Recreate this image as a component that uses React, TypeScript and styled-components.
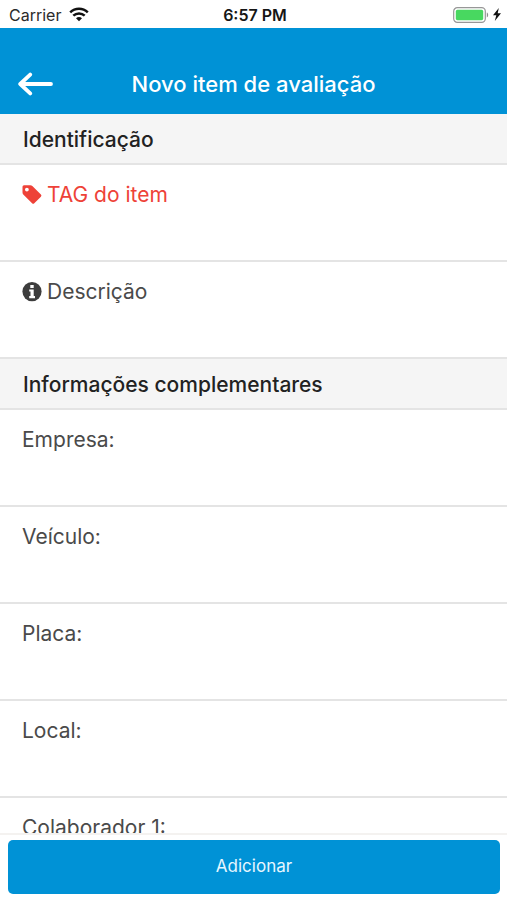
import React, { useId } from "react";
import styled, { createGlobalStyle } from "styled-components";

const blue = "#0092d6";
const line = "#e4e4e4";

const GlobalStyle = createGlobalStyle`
  * { box-sizing: border-box; }
  body {
    margin: 0;
    background: #fff;
    font-family: Inter, "Liberation Sans", sans-serif;
  }
`;

const Screen = styled.div`
  display: flex;
  flex-direction: column;
  height: 100vh;
  background: #fff;
`;

const StatusBar = styled.div`
  flex: none;
  display: grid;
  grid-template-columns: 1fr auto 1fr;
  align-items: center;
  height: 28px;
  padding: 1px 6px 0 9px;
  font-size: 16px;
  line-height: 20px;
  color: #2b2b2b;
`;

const Carrier = styled.div`
  display: flex;
  align-items: center;
  gap: 8px;
`;

const Clock = styled.time`
  font-weight: 600;
  color: #161616;
`;

const Power = styled.div`
  display: flex;
  align-items: center;
  justify-content: flex-end;
  gap: 4px;
`;

const Header = styled.header`
  flex: none;
  display: grid;
  grid-template-columns: 48px 1fr 48px;
  align-items: center;
  height: 86px;
  padding: 26px 12px 0;
  background: ${blue};
  color: #fff;
`;

const BackButton = styled.button`
  display: flex;
  align-items: center;
  justify-content: center;
  height: 44px;
  padding: 0;
  border: 0;
  background: none;
  color: inherit;
  cursor: pointer;
`;

const Title = styled.h1`
  margin: 0;
  font-size: 22px;
  line-height: 28px;
  font-weight: 500;
  text-align: center;
`;

const Form = styled.form`
  flex: 1;
  min-height: 0;
  display: flex;
  flex-direction: column;
`;

const Fields = styled.main`
  flex: 1;
  min-height: 0;
  overflow-y: auto;
  scrollbar-width: none;
`;

const SectionTitle = styled.h2`
  margin: 0;
  padding: 13px 23px 10px;
  border-bottom: 2px solid ${line};
  background: #f5f5f5;
  color: #222;
  font-size: 21px;
  line-height: 26px;
  font-weight: 500;
`;

const Row = styled.div`
  display: flex;
  flex-direction: column;
  height: 97px;
  border-bottom: 2px solid ${line};
`;

const Label = styled.label<{ $required?: boolean }>`
  display: flex;
  align-items: center;
  gap: 5px;
  padding: 17px 22px 0;
  font-size: 21px;
  line-height: 26px;
  color: ${(p) => (p.$required ? "#ee4238" : "#4a4a4a")};
`;

const TextInput = styled.input`
  flex: 1;
  width: 100%;
  min-height: 0;
  padding: 0 22px;
  border: 0;
  outline: 0;
  background: transparent;
  color: #222;
  font: inherit;
  font-size: 21px;
`;

const Footer = styled.footer`
  flex: none;
  padding: 5px 7px 6px 8px;
  border-top: 2px solid #f4f2f0;
  background: #fff;
`;

const SubmitButton = styled.button`
  display: block;
  width: 100%;
  height: 54px;
  padding: 0 0 2px;
  border: 0;
  border-radius: 5px;
  background: ${blue};
  color: #e6f6ff;
  font: inherit;
  font-size: 17px;
  cursor: pointer;
`;

const WifiIcon = () => (
  <svg width="20" height="15" viewBox="0 0 20 15" fill="none" stroke="#111" strokeWidth="2.5" aria-hidden="true">
    <path d="M1.2 5.4C6.2 .6 13.8 .6 18.8 5.4" />
    <path d="M4.3 8.7C7.5 5.6 12.5 5.6 15.7 8.7" />
    <path d="M7 11.3C8.7 9.6 11.3 9.6 13 11.3L10 14.2Z" fill="#111" stroke="none" />
  </svg>
);

const BatteryIcon = () => (
  <svg width="36" height="16" viewBox="0 0 36 16" aria-hidden="true">
    <rect x=".7" y=".7" width="31.6" height="14.6" rx="3.6" fill="#fff" stroke="#979797" strokeWidth="1.2" />
    <rect x="2.8" y="2.8" width="27.4" height="10.4" rx="1.6" fill="#48d860" />
    <path d="M33.8 5.6C35.6 6.2 35.6 9.8 33.8 10.4Z" fill="#8d8d8d" />
  </svg>
);

const BoltIcon = () => (
  <svg width="8" height="13" viewBox="0 0 8 13" aria-hidden="true">
    <path d="M5.8 0L0 7.3H3.3L1.8 13L8 5.3H4.7Z" fill="#111" />
  </svg>
);

const BackIcon = () => (
  <svg width="36" height="24" viewBox="0 0 36 24" fill="none" stroke="currentColor" strokeWidth="3.8" strokeLinecap="round" strokeLinejoin="round" aria-hidden="true">
    <path d="M33 12H2.5M12.2 2.6L2.2 12L12.2 21.4" />
  </svg>
);

const TagIcon = () => (
  <svg width="20" height="20" viewBox="0 0 20 20" fill="currentColor" aria-hidden="true">
    <path fillRule="evenodd" d="M2 .2H8.2Q9.6.2 10.6 1.2L18.9 9.5Q20 10.6 18.9 11.7L12.3 18.3Q11.2 19.3 10.1 18.3L1.5 9.7Q.5 8.7.5 7.4V1.7Q.5.2 2 .2ZM4.9 2.7A1.9 1.9 0 1 0 4.9 6.5A1.9 1.9 0 1 0 4.9 2.7Z" />
  </svg>
);

const InfoIcon = () => (
  <svg width="20" height="20" viewBox="0 0 20 20" aria-hidden="true">
    <circle cx="10" cy="9.6" r="9.6" fill="#3d3d3d" />
    <path d="M8.3 2.9H11.7V5.9H8.3ZM7.2 7.4H11.7V14H13V16.2H7.2V14H8.5V9.6H7.2Z" fill="#fff" />
  </svg>
);

interface FieldProps {
  label: string;
  icon?: React.ReactNode;
  required?: boolean;
}

function Field({ label, icon, required }: FieldProps) {
  const id = useId();
  return (
    <Row>
      <Label htmlFor={id} $required={required}>
        {icon}
        {label}
      </Label>
      <TextInput id={id} type="text" required={required} />
    </Row>
  );
}

export default function App() {
  return (
    <>
      <GlobalStyle />
      <Screen>
        <StatusBar>
          <Carrier>
            Carrier
            <WifiIcon />
          </Carrier>
          <Clock>6:57 PM</Clock>
          <Power>
            <BatteryIcon />
            <BoltIcon />
          </Power>
        </StatusBar>
        <Header>
          <BackButton type="button" aria-label="Voltar">
            <BackIcon />
          </BackButton>
          <Title>Novo item de avaliação</Title>
        </Header>
        <Form onSubmit={(e) => e.preventDefault()}>
          <Fields>
            <SectionTitle>Identificação</SectionTitle>
            <Field label="TAG do item" icon={<TagIcon />} required />
            <Field label="Descrição" icon={<InfoIcon />} />
            <SectionTitle>Informações complementares</SectionTitle>
            <Field label="Empresa:" />
            <Field label="Veículo:" />
            <Field label="Placa:" />
            <Field label="Local:" />
            <Field label="Colaborador 1:" />
          </Fields>
          <Footer>
            <SubmitButton type="submit">Adicionar</SubmitButton>
          </Footer>
        </Form>
      </Screen>
    </>
  );
}
